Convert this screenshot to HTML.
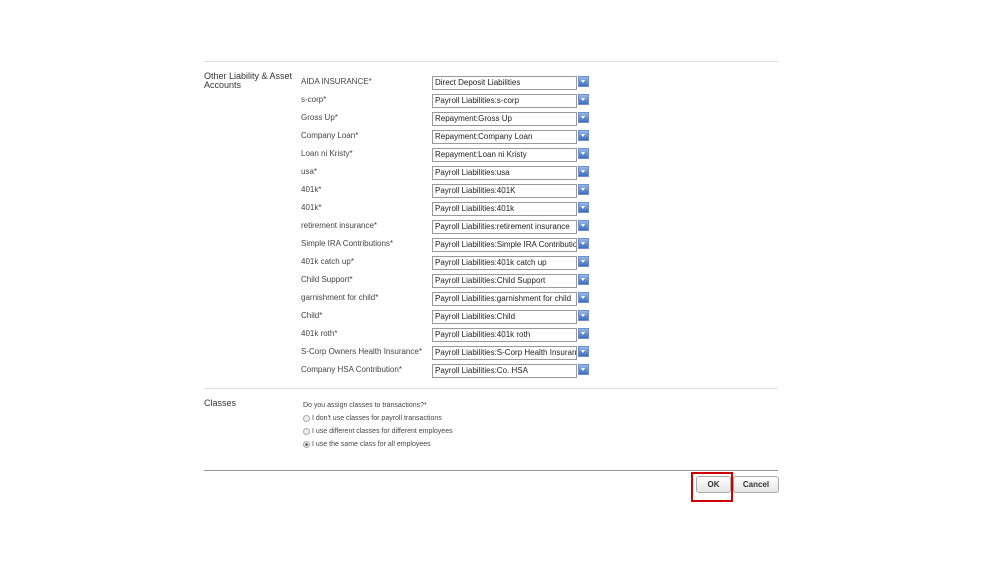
<!DOCTYPE html>
<html><head><style>
body{margin:0;width:999px;height:562px;background:#fff;font-family:"Liberation Sans",Arial,sans-serif;position:relative;overflow:hidden}
.a{position:absolute}
.lbl{font-size:8px;color:#444}
.sel{position:absolute;left:432px;height:12px;border:1px solid #999;font-size:8px;color:#222;line-height:12px;padding-left:2px;box-sizing:content-box;white-space:nowrap;overflow:hidden;width:141px}
.btn{position:absolute;left:578px;width:9px;height:9px;background:linear-gradient(#9ab8e8,#3d6cc0);border:1px solid #6f8fc8}
.btn:after{content:"";position:absolute;left:2px;top:3px;border-left:2.5px solid transparent;border-right:2.5px solid transparent;border-top:3px solid #fff}
.rad{position:absolute;left:303px;width:5px;height:5px;border:1px solid #aaa;border-radius:50%;background:#eee}
</style></head><body>
<div class="a" style="left:204px;top:61px;width:574px;height:1px;background:#ddd"></div>
<div class="a" style="left:204px;top:72px;font-size:9px;color:#333;line-height:9px">Other Liability &amp; Asset<br>Accounts</div>
<div id="rows"></div>
<div class="a" style="left:204px;top:388px;width:574px;height:1px;background:#ddd"></div>
<div class="a" style="left:204px;top:398px;font-size:9px;color:#333">Classes</div>
<div class="a lbl" style="left:303px;top:402px;font-size:7px">Do you assign classes to transactions?*</div>
<div class="rad" style="top:415px"></div><div class="a lbl" style="left:312px;top:415px;font-size:7px">I don't use classes for payroll transactions</div>
<div class="rad" style="top:428px"></div><div class="a lbl" style="left:312px;top:428px;font-size:7px">I use different classes for different employees</div>
<div class="rad" style="top:441px;background:radial-gradient(#666 35%,#eee 45%)"></div><div class="a lbl" style="left:312px;top:441px;font-size:7px">I use the same class for all employees</div>
<div class="a" style="left:204px;top:470px;width:574px;height:1px;background:#999"></div>
<div class="a" style="left:691px;top:472px;width:38px;height:26px;border:2px solid #c00"></div>
<div class="a" style="left:696px;top:476px;width:33px;height:15px;border:1px solid #aaa;border-radius:3px;background:linear-gradient(#fff,#e4e4e4);font-size:8px;font-weight:bold;text-align:center;line-height:15px;color:#333">OK</div>
<div class="a" style="left:733px;top:476px;width:44px;height:15px;border:1px solid #aaa;border-radius:3px;background:linear-gradient(#fff,#e4e4e4);font-size:8px;font-weight:bold;text-align:center;line-height:15px;color:#333">Cancel</div>
<script>
var d=[["AIDA INSURANCE*","Direct Deposit Liabilities"],["s-corp*","Payroll Liabilities:s-corp"],["Gross Up*","Repayment:Gross Up"],["Company Loan*","Repayment:Company Loan"],["Loan ni Kristy*","Repayment:Loan ni Kristy"],["usa*","Payroll Liabilities:usa"],["401k*","Payroll Liabilities:401K"],["401k*","Payroll Liabilities:401k"],["retirement insurance*","Payroll Liabilities:retirement insurance"],["Simple IRA Contributions*","Payroll Liabilities:Simple IRA Contributions"],["401k catch up*","Payroll Liabilities:401k catch up"],["Child Support*","Payroll Liabilities:Child Support"],["garnishment for child*","Payroll Liabilities:garnishment for child"],["Child*","Payroll Liabilities:Child"],["401k roth*","Payroll Liabilities:401k roth"],["S-Corp Owners Health Insurance*","Payroll Liabilities:S-Corp Health Insurance"],["Company HSA Contribution*","Payroll Liabilities:Co. HSA"]];
var h="";d.forEach(function(r,i){var y=76+i*18;h+='<div class="a lbl" style="left:301px;top:'+(y+1)+'px">'+r[0]+'</div><div class="sel" style="top:'+y+'px">'+r[1]+'</div><div class="btn" style="top:'+(y)+'px"></div>';});
document.getElementById("rows").innerHTML=h;
</script>
</body></html>
